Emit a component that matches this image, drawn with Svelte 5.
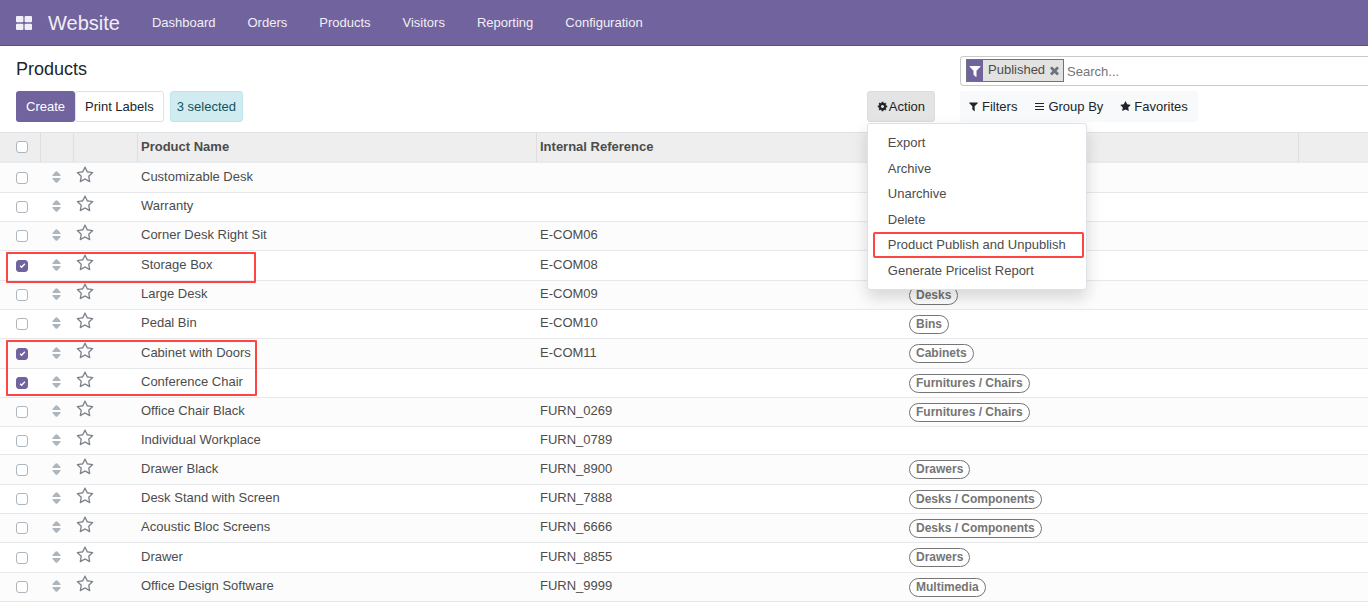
<script>
  const nav = ['Dashboard', 'Orders', 'Products', 'Visitors', 'Reporting', 'Configuration'];

  const actions = [
    { label: 'Export' },
    { label: 'Archive' },
    { label: 'Unarchive' },
    { label: 'Delete' },
    { label: 'Product Publish and Unpublish', marked: true },
    { label: 'Generate Pricelist Report' }
  ];

  let rows = $state([
    { name: 'Customizable Desk' },
    { name: 'Warranty' },
    { name: 'Corner Desk Right Sit', ref: 'E-COM06' },
    { name: 'Storage Box', ref: 'E-COM08', checked: true, mark: 'one' },
    { name: 'Large Desk', ref: 'E-COM09', tag: 'Desks' },
    { name: 'Pedal Bin', ref: 'E-COM10', tag: 'Bins' },
    { name: 'Cabinet with Doors', ref: 'E-COM11', tag: 'Cabinets', checked: true, mark: 'two' },
    { name: 'Conference Chair', tag: 'Furnitures / Chairs', checked: true },
    { name: 'Office Chair Black', ref: 'FURN_0269', tag: 'Furnitures / Chairs' },
    { name: 'Individual Workplace', ref: 'FURN_0789', compact: true },
    { name: 'Drawer Black', ref: 'FURN_8900', tag: 'Drawers' },
    { name: 'Desk Stand with Screen', ref: 'FURN_7888', tag: 'Desks / Components' },
    { name: 'Acoustic Bloc Screens', ref: 'FURN_6666', tag: 'Desks / Components' },
    { name: 'Drawer', ref: 'FURN_8855', tag: 'Drawers' },
    { name: 'Office Design Software', ref: 'FURN_9999', tag: 'Multimedia' }
  ]);

  const filterPath =
    'M1595 295q17 41-14 70l-493 493v742q0 42-39 59-13 5-25 5-27 0-45-19l-256-256q-19-19-19-45v-486l-493-493q-31-29-14-70 17-39 59-39h1280q42 0 59 39z';
  const cogPath =
    'M1152 896q0-106-75-181t-181-75-181 75-75 181 75 181 181 75 181-75 75-181zm512-109v222q0 12-8 23t-20 13l-185 28q-19 54-39 91 35 50 107 138 10 12 10 25t-9 23q-27 37-99 108t-94 71q-12 0-26-9l-138-108q-44 23-91 38-16 136-29 186-7 28-36 28h-222q-14 0-24.500-8.500t-11.500-21.500l-28-184q-49-16-90-37l-141 107q-10 9-25 9-14 0-25-11-126-114-165-168-7-10-7-23 0-12 8-23 15-21 51-66.500t54-70.500q-27-50-41-99l-183-27q-13-2-21-12.500t-8-23.500v-222q0-12 8-23t19-13l186-28q14-46 39-92-40-57-107-138-10-12-10-24 0-10 9-23 26-36 98.500-107.500t94.500-71.500q13 0 26 10l138 107q44-23 91-38 16-136 29-186 7-28 36-28h222q14 0 24.500 8.500t11.500 21.500l28 184q49 16 90 37l142-107q9-9 24-9 13 0 25 10 129 119 165 170 7 8 7 22 0 12-8 23-15 21-51 66.500t-54 70.500q26 50 41 98l183 28q13 2 21 12.500t8 23.500z';
  const starPath =
    'M1728 647q0 22-26 48l-363 354 86 500q1 7 1 20 0 21-10.500 35.500t-30.500 14.500q-19 0-40-12l-449-236-449 236q-22 12-40 12-21 0-31.500-14.500t-10.500-35.500q0-6 2-20l86-500-364-354q-25-27-25-48 0-37 56-46l502-73 225-455q19-41 49-41t49 41l225 455 502 73q56 9 56 46z';
  const starOutlinePath =
    'M1201 1004l306-297-422-62-189-382-189 382-422 62 306 297-73 421 378-199 377 199zm527-357q0 22-26 48l-363 354 86 500q1 7 1 20 0 50-41 50-19 0-40-12l-449-236-449 236q-22 12-40 12-21 0-31.500-14.500t-10.500-35.500q0-6 2-20l86-500-364-354q-25-27-25-48 0-37 56-46l502-73 225-455q19-41 49-41t49 41l225 455 502 73q56 9 56 46z';
  const timesPath =
    'M1490 1322q0 40-28 68l-136 136q-28 28-68 28t-68-28l-294-294-294 294q-28 28-68 28t-68-28l-136-136q-28-28-28-68t28-68l294-294-294-294q-28-28-28-68t28-68l136-136q28-28 68-28t68 28l294 294 294-294q28-28 68-28t68 28l136 136q28 28 28 68t-28 68l-294 294 294 294q28 28 28 68z';
</script>

{#snippet icon(path, size)}
  <svg width={size} height={size} viewBox="0 0 1792 1792" fill="currentColor" aria-hidden="true"><path d={path} /></svg>
{/snippet}

<header class="navbar">
  <button class="apps" aria-label="Apps">
    <svg width="16" height="14" viewBox="0 0 16 14" fill="currentColor" aria-hidden="true">
      <rect width="7.400" height="6.300" rx="1" /><rect x="8.600" width="7.400" height="6.300" rx="1" />
      <rect y="7.700" width="7.400" height="6.300" rx="1" /><rect x="8.600" y="7.700" width="7.400" height="6.300" rx="1" />
    </svg>
  </button>
  <nav>
    <a class="brand" href="#website">Website</a>
    {#each nav as item}
      <a href={'#' + item.toLowerCase()}>{item}</a>
    {/each}
  </nav>
</header>

<section class="panel">
  <h1>Products</h1>
  <div class="search">
    <div class="facet">
      <span class="facet-icon">{@render icon(filterPath, 14)}</span>
      <span class="facet-label">Published</span>
      <button class="remove" aria-label="Remove">{@render icon(timesPath, 13)}</button>
    </div>
    <input type="text" placeholder="Search..." aria-label="Search" />
  </div>
  <div class="buttons">
    <button class="btn primary">Create</button>
    <button class="btn outline">Print Labels</button>
    <span class="selected">3 selected</span>
  </div>
  <div class="action">
    <button class="btn active" aria-expanded="true">{@render icon(cogPath, 11)}Action</button>
    <ul class="menu">
      {#each actions as action}
        <li><button class:marked={action.marked}>{action.label}</button></li>
      {/each}
    </ul>
  </div>
  <div class="filters">
    <button>{@render icon(filterPath, 11)}Filters</button>
    <button>
      <svg width="11" height="11" viewBox="0 0 11 11" fill="currentColor" aria-hidden="true">
        <rect x="1" y="2" width="9" height="1" /><rect x="1" y="5" width="9" height="1" /><rect x="1" y="8" width="9" height="1" />
      </svg>Group By
    </button>
    <button>{@render icon(starPath, 11)}Favorites</button>
  </div>
</section>

<table>
  <colgroup>
    <col class="c-check" /><col class="c-handle" /><col class="c-star" /><col class="c-name" /><col class="c-ref" /><col /><col class="c-end" />
  </colgroup>
  <thead>
    <tr>
      <th><input type="checkbox" aria-label="Select all" /></th>
      <th></th>
      <th></th>
      <th>Product Name</th>
      <th>Internal Reference</th>
      <th></th>
      <th></th>
    </tr>
  </thead>
  <tbody>
    {#each rows as row}
      <tr class:compact={row.compact}>
        <td class="check">
          {#if row.mark}<span class="frame {row.mark}"></span>{/if}
          <input type="checkbox" bind:checked={row.checked} aria-label={row.name} />
        </td>
        <td class="handle">
          <svg width="9" height="12" viewBox="0 0 9 12" fill="currentColor" aria-hidden="true">
            <path d="M.5 5V4L3.400.8Q4.500-.2 5.600.8L8.500 4v1zM.5 7V8l2.900 3.200q1.100 1 2.200 0L8.500 8V7z" />
          </svg>
        </td>
        <td class="star"><button aria-label="Favorite">{@render icon(starOutlinePath, 18)}</button></td>
        <td>{row.name}</td>
        <td>{row.ref ?? ''}</td>
        <td class="category">{#if row.tag}<span class="tag">{row.tag}</span>{/if}</td>
        <td></td>
      </tr>
    {/each}
  </tbody>
</table>

<style>
  :global(body) {
    margin: 0;
    background: #fff;
    color: #4c4c4c;
    font: 13px/20px "Liberation Sans", Arial, sans-serif;
    overflow-x: hidden;
  }
  button, input {
    font: inherit;
    color: inherit;
    margin: 0;
  }
  button {
    padding: 0;
    border: 0;
    background: none;
    cursor: pointer;
  }
  svg {
    display: block;
    flex: none;
  }

  .navbar {
    display: flex;
    align-items: center;
    gap: 16px;
    height: 45px;
    padding: 0 16px;
    background: #71639e;
    border-bottom: 1px solid #5a4f7f;
    color: #f1eff5;
  }
  nav {
    display: flex;
    align-items: center;
    gap: 32px;
  }
  nav a {
    color: inherit;
    text-decoration: none;
  }
  nav .brand {
    font-size: 20px;
  }

  .panel {
    display: grid;
    grid-template-columns: 1fr auto 408px;
    column-gap: 25px;
    row-gap: 5px;
    padding: 10px 0;
    color: #212529;
  }
  h1 {
    grid-column: 1 / 3;
    margin: 0;
    padding: 3px 16px;
    font-size: 18px;
    line-height: 20px;
    font-weight: 400;
  }
  .search {
    display: flex;
    align-items: center;
    box-sizing: border-box;
    height: 30px;
    padding: 0 5px;
    border: 1px solid #c9c9cc;
    border-right: 0;
    border-radius: 4px 0 0 4px;
  }
  .facet {
    display: flex;
    align-items: center;
    box-sizing: border-box;
    height: 23px;
    margin-bottom: 1px;
    border: 1px solid #6c757d;
    background: #e2e2e0;
    color: #4c4c4c;
  }
  .facet-icon {
    display: flex;
    align-items: center;
    align-self: stretch;
    padding: 0 1px;
    background: #71639e;
    color: #fff;
  }
  .facet-label {
    padding: 0 3px 1px 5px;
  }
  .remove {
    padding-right: 2px;
    color: #6c757d;
  }
  .search input {
    flex: 1;
    min-width: 0;
    padding: 1px 3px 0;
    border: 0;
    outline: 0;
    background: none;
  }
  .search input::placeholder {
    color: #757575;
    opacity: 1;
  }
  .buttons {
    display: flex;
    padding-left: 16px;
  }
  .btn {
    display: flex;
    align-items: center;
    box-sizing: border-box;
    height: 31px;
    padding: 0 9px;
    border: 1px solid transparent;
    border-radius: 3px;
  }
  .primary {
    background: #71639e;
    color: #fff;
  }
  .outline {
    background: #fff;
    border-color: #dee2e6;
  }
  .active {
    gap: 1px;
    background: #e4e4e4;
    border-color: #dcdcdc;
  }
  .selected {
    box-sizing: border-box;
    height: 31px;
    margin-left: 6px;
    padding: 0 6px;
    border: 1px solid #bee5eb;
    border-radius: 3px;
    background: #d1ecf1;
    color: #0c5460;
    line-height: 29px;
  }
  .action {
    position: relative;
  }
  .menu {
    position: absolute;
    z-index: 2;
    top: 32px;
    left: 0;
    box-sizing: border-box;
    width: 220px;
    margin: 0;
    padding: 6px 2px 6px 5px;
    border: 1px solid #dee2e6;
    border-radius: 3px;
    background: #fff;
    box-shadow: 0 8px 16px rgba(0, 0, 0, 0.15);
    color: #4c4c4c;
    list-style: none;
  }
  .menu button {
    display: block;
    box-sizing: border-box;
    width: 100%;
    height: 26px;
    padding: 0 13px;
    border: 2px solid transparent;
    text-align: left;
    white-space: nowrap;
    line-height: 20px;
  }
  .menu li:nth-child(even) button {
    height: 25px;
  }
  .menu .marked {
    border-color: #f44;
    border-radius: 2px;
  }
  .filters {
    display: flex;
    gap: 17px;
    justify-self: start;
    height: 31px;
    padding: 0 10px 0 8px;
    border-radius: 3px;
    background: #f8f9fa;
  }
  .filters button {
    display: flex;
    align-items: center;
    gap: 3px;
  }

  table {
    width: 100%;
    border-collapse: separate;
    border-spacing: 0;
    table-layout: fixed;
    border-top: 1px solid #dee2e6;
  }
  .c-check { width: 41px; }
  .c-handle { width: 33px; }
  .c-star { width: 64px; }
  .c-name { width: 399px; }
  .c-ref { width: 368px; }
  .c-end { width: 69px; }
  th {
    box-sizing: border-box;
    height: 30px;
    padding: 0 3px;
    background: #eee;
    border-right: 1px solid #dedede;
    border-bottom: 2px solid #e9ecef;
    text-align: left;
    font-weight: 700;
  }
  th:last-child {
    border-right: 0;
  }
  th:first-child {
    padding: 0 0 0 16px;
  }
  td {
    box-sizing: border-box;
    height: 29px;
    padding: 0 3px 2px;
    border-bottom: 1px solid #e6e8ea;
    white-space: nowrap;
  }
  tbody tr:nth-child(-3n + 7) td,
  tbody tr:nth-child(3n + 11) td {
    height: 30px;
  }
  tbody .compact td {
    height: 28px;
  }
  tbody tr:nth-child(odd) td {
    background: #fcfcfc;
  }
  td.check {
    position: relative;
    padding: 0 0 0 16px;
  }
  td.handle {
    padding: 0 0 2px 11px;
    color: #adb5bd;
  }
  td.star {
    padding: 0 2px 6px;
    color: #7c8289;
  }
  td.star button {
    display: block;
  }
  td.category {
    padding: 0 4px;
  }
  input[type='checkbox'] {
    display: block;
    box-sizing: border-box;
    width: 12px;
    height: 12px;
    appearance: none;
    border: 1px solid #adb5bd;
    border-radius: 3px;
    background: #fff;
  }
  input[type='checkbox']:checked {
    border-color: #71639e;
    background: #71639e url("data:image/svg+xml,%3Csvg xmlns='http://www.w3.org/2000/svg' viewBox='0 0 8 8'%3E%3Cpath fill='none' stroke='%23fff' stroke-width='1.600' d='M1.300 4.200l1.700 1.700 3.700-3.900'/%3E%3C/svg%3E") center / 7px 7px no-repeat;
  }
  .frame {
    position: absolute;
    z-index: 1;
    top: 1px;
    left: 6px;
    box-sizing: border-box;
    border: 2px solid #f44;
    border-radius: 1px;
    pointer-events: none;
  }
  .frame.one {
    width: 250px;
    height: 31px;
  }
  .frame.two {
    width: 251px;
    height: 56px;
  }
  .tag {
    display: block;
    box-sizing: border-box;
    width: fit-content;
    height: 19px;
    padding: 0 6px;
    border: 1px solid #757575;
    border-radius: 10px;
    background: #fff;
    color: #757575;
    font-size: 12px;
    line-height: 16px;
    font-weight: 700;
  }
</style>
